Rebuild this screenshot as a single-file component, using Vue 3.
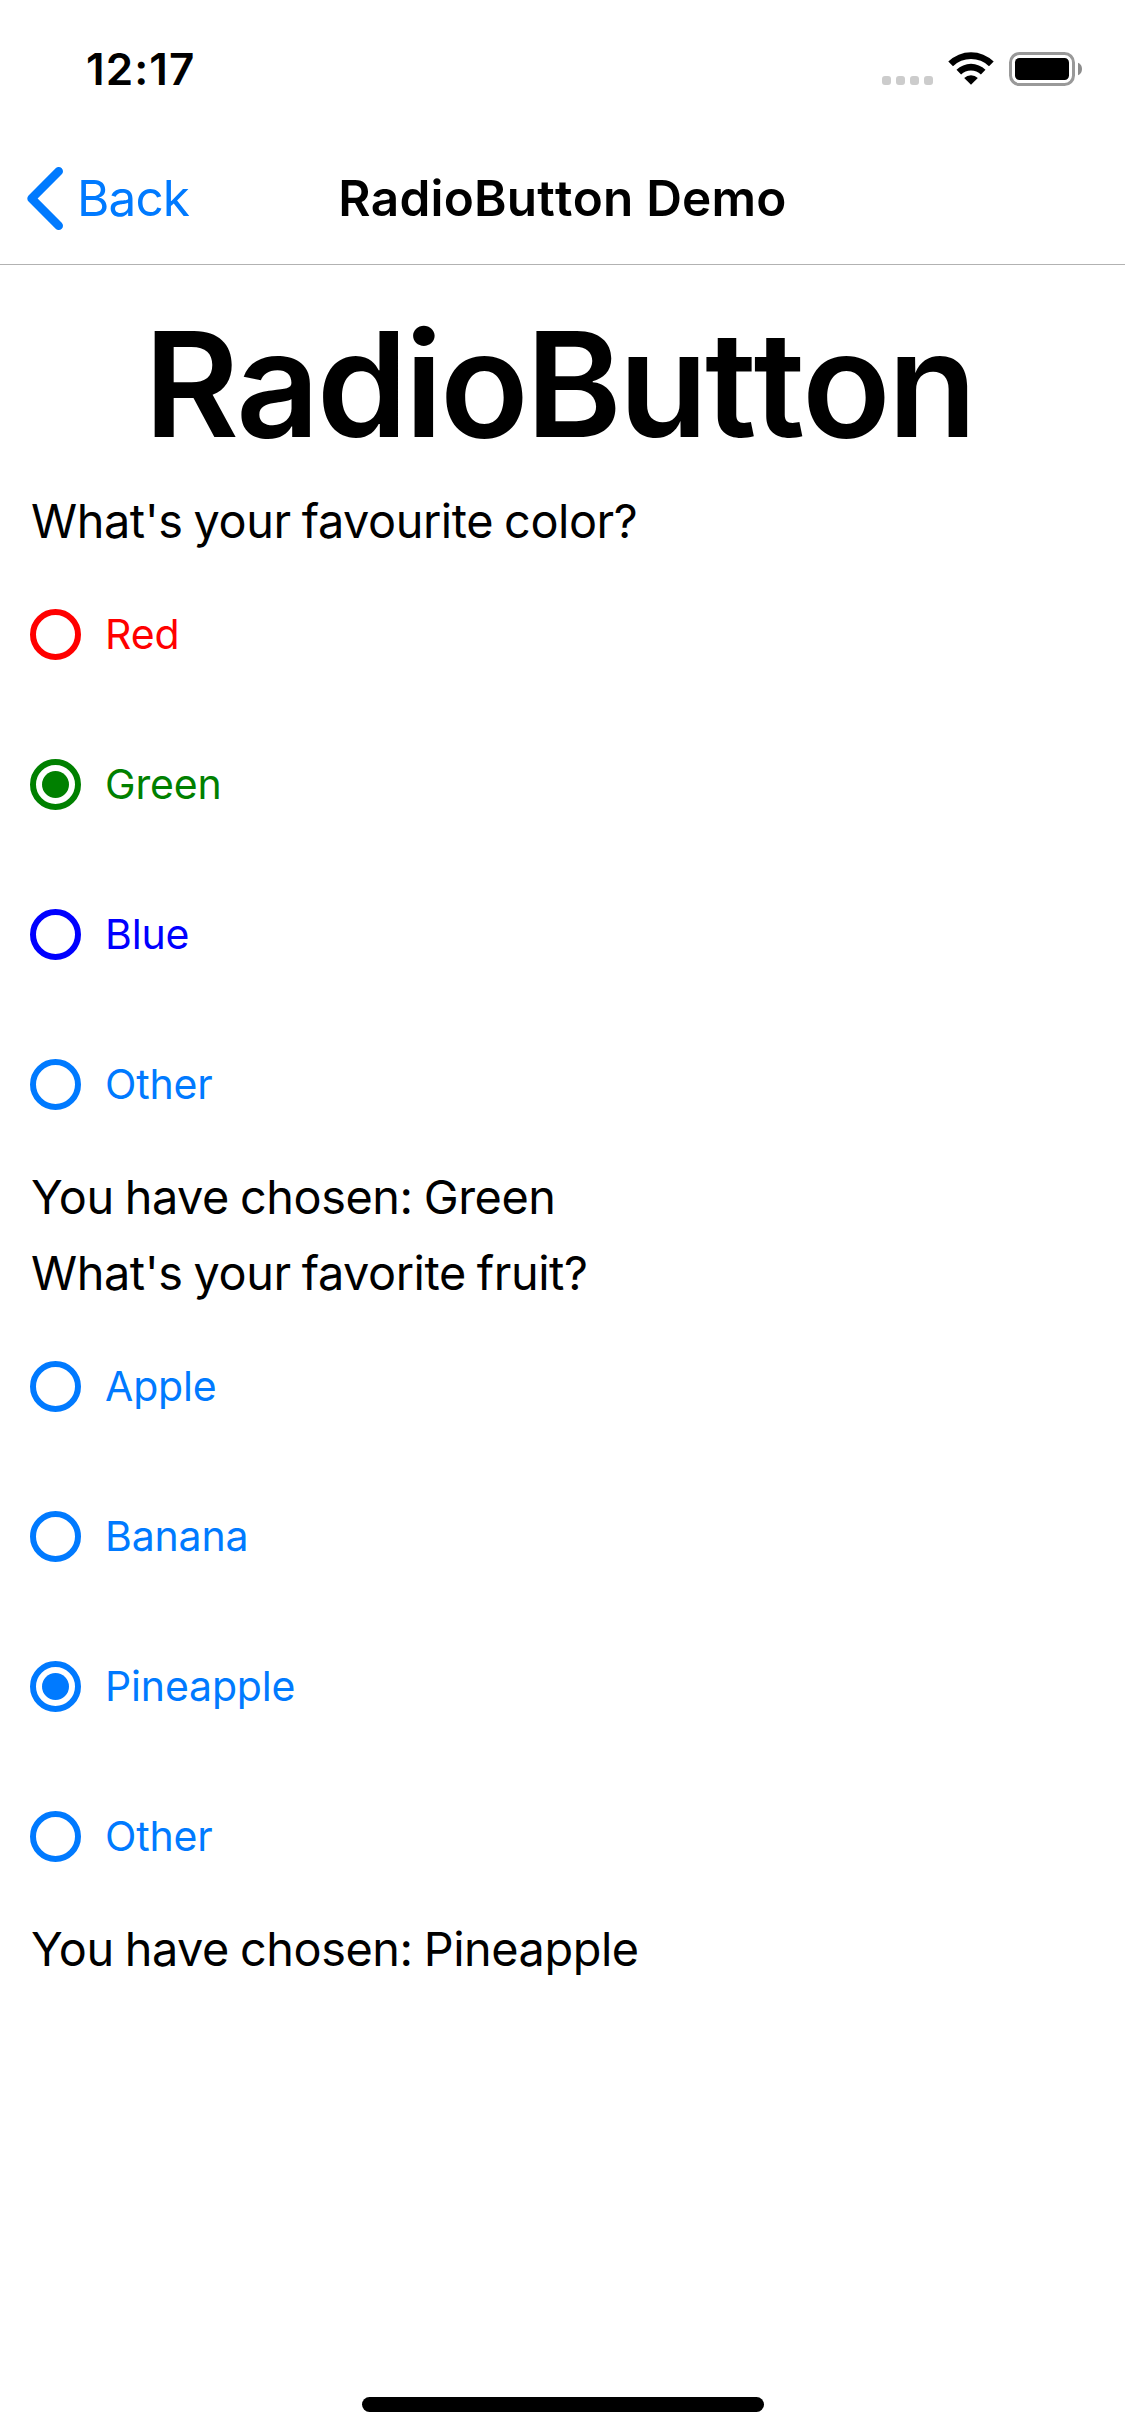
<script setup>
import { ref } from 'vue'

const accent = '#007aff'

const groups = ref([
  {
    id: 'color',
    question: "What's your favourite color?",
    chosen: 'Green',
    options: [
      { label: 'Red', color: '#ff0000' },
      { label: 'Green', color: '#008000' },
      { label: 'Blue', color: '#0000ff' },
      { label: 'Other', color: accent },
    ],
  },
  {
    id: 'fruit',
    question: "What's your favorite fruit?",
    chosen: 'Pineapple',
    options: [
      { label: 'Apple', color: accent },
      { label: 'Banana', color: accent },
      { label: 'Pineapple', color: accent },
      { label: 'Other', color: accent },
    ],
  },
])
</script>

<template>
  <div class="screen">
    <header class="status-bar">
      <span class="time">12:17</span>
      <div class="indicators">
        <div class="signal"><i v-for="n in 4" :key="n"></i></div>
        <svg class="wifi" width="46" height="33" viewBox="0 0 46 33">
          <path d="M0.3 9.6A32.3 32.3 0 0 1 45.7 9.6L41 14.3A25.6 25.6 0 0 0 5 14.3Z" />
          <path d="M8.5 17.8A20.7 20.7 0 0 1 37.5 17.8L32.9 22.5A14.1 14.1 0 0 0 13.1 22.5Z" />
          <path d="M16.2 25.9A9.8 9.8 0 0 1 29.8 25.9L23 32.8Z" />
        </svg>
        <svg class="battery" width="74" height="34" viewBox="0 0 74 34">
          <rect x="1.5" y="1.5" width="63" height="31" rx="9" fill="none" stroke="#999" stroke-width="3" />
          <rect x="6" y="6" width="54" height="22" rx="4.5" />
          <path d="M69 10.8C71.8 11.9 73 14.3 73 17S71.8 22.1 69 23.2Z" fill="#8c8c8c" />
        </svg>
      </div>
    </header>

    <nav class="nav-bar">
      <a class="back">
        <svg width="42" height="66" viewBox="0 0 42 66">
          <path d="M35.7 6.3L8.6 33.5L35.7 60.7" />
        </svg>
        <span>Back</span>
      </a>
      <span class="nav-title">RadioButton Demo</span>
    </nav>

    <main>
      <h1>RadioButton</h1>
      <section v-for="group in groups" :key="group.id">
        <p class="label">{{ group.question }}</p>
        <div
          v-for="option in group.options"
          :key="option.label"
          class="option"
          :style="{ color: option.color }"
          @click="group.chosen = option.label"
        >
          <span class="ring"><i v-if="group.chosen === option.label"></i></span>
          <span class="option-text">{{ option.label }}</span>
        </div>
        <p class="label">You have chosen: {{ group.chosen }}</p>
      </section>
    </main>

    <footer><div class="home-indicator"></div></footer>
  </div>
</template>

<style>
body {
  margin: 0;
  background: #fff;
}
</style>

<style scoped>
.screen {
  width: 1125px;
  height: 2436px;
  display: flex;
  flex-direction: column;
  background: #fff;
  color: #000;
  font-family: Inter, "Liberation Sans", sans-serif;
}

.status-bar {
  height: 132px;
  box-sizing: border-box;
  display: flex;
  justify-content: space-between;
  padding: 0 42px 0 86px;
}

.time {
  font-size: 44px;
  font-weight: 600;
  line-height: 138px;
  letter-spacing: 1.1px;
}

.indicators {
  display: flex;
  align-items: flex-start;
  padding-top: 52px;
}

.signal {
  display: flex;
  gap: 5px;
  margin: 24px 15px 0 0;
}

.signal i {
  width: 9px;
  height: 9px;
  border-radius: 3px;
  background: #ccc;
}

.battery {
  margin-left: 15px;
}

.nav-bar {
  height: 133px;
  box-sizing: border-box;
  display: grid;
  grid-template-columns: 1fr auto 1fr;
  align-items: center;
  border-bottom: 1px solid #b2b2b2;
  font-size: 49.5px;
  line-height: 132px;
}

.back {
  display: flex;
  align-items: center;
  padding-left: 22.5px;
  color: #007aff;
  letter-spacing: -0.9px;
}

.back svg {
  margin-right: 12.5px;
}

.back path {
  fill: none;
  stroke: currentColor;
  stroke-width: 8.6;
  stroke-linecap: round;
  stroke-linejoin: round;
}

.nav-title {
  font-weight: 600;
  font-kerning: none;
  letter-spacing: 0.2px;
}

main {
  flex: 1;
}

h1 {
  margin: 0;
  padding: 20px 7px 0 0;
  font-size: 145.8px;
  font-weight: 600;
  font-kerning: none;
  line-height: 198px;
  letter-spacing: -3px;
  text-align: center;
}

.label {
  margin: 0;
  padding-left: 31px;
  font-size: 46.8px;
  line-height: 76px;
  letter-spacing: -0.42px;
  word-spacing: -1.7px;
  white-space: nowrap;
}

.option {
  height: 150px;
  display: flex;
  align-items: center;
  padding-left: 30px;
  font-size: 41px;
  letter-spacing: -0.15px;
}

.ring {
  width: 51px;
  height: 51px;
  box-sizing: border-box;
  display: flex;
  align-items: center;
  justify-content: center;
  border: 6px solid currentColor;
  border-radius: 50%;
}

.ring i {
  width: 27px;
  height: 27px;
  border-radius: 50%;
  background: currentColor;
}

.option-text {
  margin-left: 24px;
}

footer {
  display: flex;
  justify-content: center;
  padding-bottom: 24px;
}

.home-indicator {
  width: 402px;
  height: 15px;
  border-radius: 8px;
  background: #000;
}
</style>
